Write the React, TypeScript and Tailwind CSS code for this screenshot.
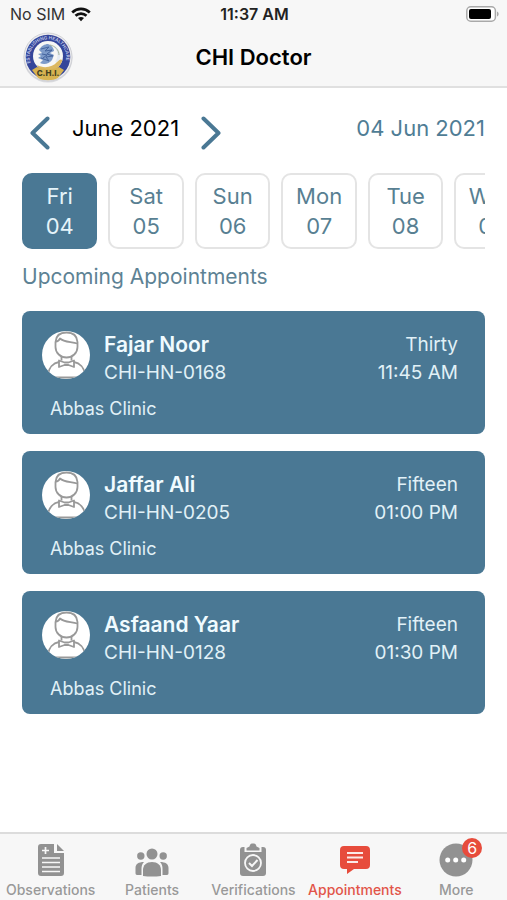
import type { ReactNode } from "react";

const days = [
  ["Fri", "04"],
  ["Sat", "05"],
  ["Sun", "06"],
  ["Mon", "07"],
  ["Tue", "08"],
  ["Wed", "09"],
];

const appointments = [
  { name: "Fajar Noor", code: "CHI-HN-0168", length: "Thirty", time: "11:45 AM", clinic: "Abbas Clinic" },
  { name: "Jaffar Ali", code: "CHI-HN-0205", length: "Fifteen", time: "01:00 PM", clinic: "Abbas Clinic" },
  { name: "Asfaand Yaar", code: "CHI-HN-0128", length: "Fifteen", time: "01:30 PM", clinic: "Abbas Clinic" },
];

function Wifi() {
  return (
    <svg className="h-[15px] w-5" viewBox="0 0 20 15" fill="none" stroke="#111" strokeWidth="2.7" aria-hidden="true">
      <path d="M1.2 5.4C6.2.8 13.8.8 18.8 5.4" />
      <path d="M4.5 8.8C7.6 5.9 12.4 5.9 15.5 8.8" />
      <path d="M10 14.3l-3-3.2c1.7-1.5 4.3-1.5 6 0z" fill="#111" stroke="none" />
    </svg>
  );
}

function Battery() {
  return (
    <svg className="h-4 w-[33px]" viewBox="0 0 33 16" aria-hidden="true">
      <rect x="0.8" y="0.8" width="28.6" height="14.4" rx="4" fill="#fff" stroke="#a9a9a9" strokeWidth="1.5" />
      <rect x="3" y="3" width="22" height="10" rx="2" fill="#000" />
      <path d="M31 5.5c2.2.8 2.2 4.2 0 5z" fill="#a9a9a9" />
    </svg>
  );
}

function Logo() {
  return (
    <svg className="size-[52px]" viewBox="0 0 52 52" role="img" aria-label="CHI">
      <defs>
        <path id="ring" d="M8.5 32A18.3 18.3 0 1 1 43.5 32" />
      </defs>
      <circle cx="26" cy="27" r="24.5" fill="#d9dade" />
      <circle cx="26" cy="26" r="24" fill="#ececee" stroke="#c9cacf" strokeWidth="0.8" />
      <circle cx="26" cy="26" r="22.3" fill="#35469a" />
      <text fill="#c3cbea" fontSize="4.6" fontFamily="Inter, sans-serif" fontWeight="600">
        <textPath href="#ring">ESTABLISHING HEALTHCARE</textPath>
      </text>
      <circle cx="26" cy="25" r="15" fill="#f7f7f5" />
      <path d="M15 34c7 4 16 2 20-3 2-3 4-3 5.5-2-2 7-8 11-14.5 11-5 0-9-2-11-6z" fill="#dcb860" />
      <path d="M17 19c2-4 6-6 9-6 3 1 6 4 6 7l-4 2 4 2-2 5c-3 4-8 5-12 3l3-3-5-2 3-2-3-2 4-1z" fill="#7d9bc9" />
      <path d="M19 18l8-2-4 4 7-1-5 4 6 2-7 1 3 4-8-3M20 23l5 1-4 3" fill="none" stroke="#45659f" strokeWidth="1" />
      <path d="M31 14c5 2 8 7 7 13-1 3-3 4-5 4 4-5 3-11-2-17z" fill="#e4ebf2" />
      <path d="M28 14c5 1 9 5 9 10" fill="none" stroke="#97a789" strokeWidth="0.8" />
      <path d="M10 39l5-3c6 3 16 3 22 0l5 3-6 8c-5 3-15 3-20 0z" fill="#d7b351" />
      <text x="26" y="45" textAnchor="middle" fill="#43401f" fontSize="8" fontWeight="800" fontFamily="Inter, sans-serif">C.H.I.</text>
    </svg>
  );
}

function Chevron({ next = false }: { next?: boolean }) {
  return (
    <svg className="h-[34px] w-5" viewBox="0 0 20 34" fill="none" stroke="#4a7894" strokeWidth="4" strokeLinecap="round" strokeLinejoin="round" aria-hidden="true">
      <path d={next ? "M2.5 2.5l15 14.5-15 14.5" : "M17.5 2.5L2.5 17l15 14.5"} />
    </svg>
  );
}

function Avatar() {
  return (
    <svg className="size-12 shrink-0 rounded-full bg-white" viewBox="0 0 48 48" fill="none" stroke="#999" strokeWidth="1.8" strokeLinejoin="round" aria-hidden="true">
      <path d="M13.500 11C14 4 18 1.500 24.500 1.500S35 4 35.500 11v5c0 6-5 10.500-11 10.500S13.500 22 13.500 16z" />
      <path d="M14 10.500c2 0 3-1 4-3 4 4 11 3 17.500 5" />
      <path d="M19.500 25.500v4M29.500 25.500v4" />
      <path d="M17 29.500l5.500 2h4l5.500-2v6.500l-5.500-2h-4l-5.500 2z" />
      <path d="M17 31C11 32 7 37 6 43M32 31c6 1 10 6 11 12" />
      <path d="M10 46.500h28" />
    </svg>
  );
}

function ObservationsIcon() {
  return (
    <svg className="size-9" viewBox="0 0 36 36" aria-hidden="true">
      <path d="M8 2h13v9h10v20a3 3 0 0 1-3 3H8a3 3 0 0 1-3-3V5a3 3 0 0 1 3-3z" fill="#929292" />
      <path d="M24 2l7 7h-7z" fill="#929292" />
      <path d="M12.5 5v7M9 8.500h7M9 16h18M9 20.500h18M9 25h18M9 29.500h18" stroke="#f7f7f7" strokeWidth="1.700" />
    </svg>
  );
}

function PatientsIcon() {
  return (
    <svg className="size-9" viewBox="0 0 36 36" fill="#929292" aria-hidden="true">
      <circle cx="18" cy="12" r="5.5" />
      <circle cx="6.8" cy="14" r="3.7" />
      <circle cx="29.2" cy="14" r="3.7" />
      <path d="M9 34v-6c0-5 3.500-8 9-8s9 3 9 8v6q-9 1-18 0z" />
      <path d="M7.500 33H3c-1 0-1.500-1-1.500-2v-5c0-4 3-6 8.500-6-2 2-2.500 4-2.500 7zM28.500 33H33c1 0 1.500-1 1.500-2v-5c0-4-3-6-8.500-6 2 2 2.500 4 2.500 7z" />
    </svg>
  );
}

function VerificationsIcon() {
  return (
    <svg className="size-9" viewBox="0 0 36 36" aria-hidden="true">
      <path d="M8 5h20a3 3 0 0 1 3 3v23a3 3 0 0 1-3 3H8a3 3 0 0 1-3-3V8a3 3 0 0 1 3-3z" fill="#929292" />
      <path d="M9.500 3h17v7h-17z" fill="#f7f7f7" />
      <path d="M11.500 8.500V6l3-1.500C15 2 16 1.500 18 1.500s3 .5 3.500 3l3 1.500v2.500z" fill="#929292" />
      <circle cx="18" cy="21" r="8" fill="none" stroke="#f7f7f7" strokeWidth="1.800" />
      <path d="M14 21l3 3 5.500-6" fill="none" stroke="#f7f7f7" strokeWidth="2" />
    </svg>
  );
}

function AppointmentsIcon() {
  return (
    <svg className="size-9" viewBox="0 0 36 36" aria-hidden="true">
      <path d="M7 4h22a4 4 0 0 1 4 4v15a4 4 0 0 1-4 4H17l-7 5v-5H7a4 4 0 0 1-4-4V8a4 4 0 0 1 4-4z" fill="#e74c3c" />
      <path d="M10 11h16M10 15.500h16M10 20h11" stroke="#fbeae7" strokeWidth="1.800" />
    </svg>
  );
}

function MoreIcon() {
  return (
    <svg className="size-9" viewBox="0 0 36 36" aria-hidden="true">
      <circle cx="18" cy="18" r="16.500" fill="#929292" />
      <circle cx="9.700" cy="18" r="2.500" fill="#fff" />
      <circle cx="17.700" cy="18" r="2.500" fill="#fff" />
      <circle cx="25.700" cy="18" r="2.500" fill="#fff" />
    </svg>
  );
}

const tabs: { label: string; icon: ReactNode; active?: boolean; badge?: string }[] = [
  { label: "Observations", icon: <ObservationsIcon /> },
  { label: "Patients", icon: <PatientsIcon /> },
  { label: "Verifications", icon: <VerificationsIcon /> },
  { label: "Appointments", icon: <AppointmentsIcon />, active: true },
  { label: "More", icon: <MoreIcon />, badge: "6" },
];

export default function App() {
  return (
    <div className="flex min-h-screen flex-col bg-white font-['Inter',sans-serif]">
      <header className="border-b-2 border-[#e0e0e0] bg-[#f7f7f7]">
        <div className="grid h-7 grid-cols-3 items-center pr-2 pl-[10px]">
          <div className="flex items-center gap-1.5 text-base text-[#333]">
            No SIM <Wifi />
          </div>
          <div className="text-center text-base font-semibold text-[#222]">11:37 AM</div>
          <div className="flex justify-end"><Battery /></div>
        </div>
        <div className="grid h-[58px] grid-cols-[1fr_auto_1fr] items-center px-[22px]">
          <Logo />
          <h1 className="text-[22px] leading-7 font-semibold text-black">CHI Doctor</h1>
        </div>
      </header>

      <main className="flex-1 px-[22px] pt-6">
        <div className="flex items-start justify-between">
          <div className="flex items-start">
            <button type="button" aria-label="Previous month" className="pt-1 pl-2"><Chevron /></button>
            <h2 className="w-[151px] text-center text-[22px] leading-8 text-black">June 2021</h2>
            <button type="button" aria-label="Next month" className="pt-1"><Chevron next /></button>
          </div>
          <p className="text-[22px] leading-8 text-[#4f7d95]">04 Jun 2021</p>
        </div>

        <div className="mt-[23px] grid auto-cols-[16.3%] grid-flow-col gap-[11px] overflow-hidden">
          {days.map(([day, date], i) => (
            <button
              key={date}
              type="button"
              aria-pressed={i === 0}
              className={
                "flex h-[76px] flex-col items-center justify-center rounded-[10px] border-2 text-[22px] leading-[30px] " +
                (i === 0 ? "border-[#4a7894] bg-[#4a7894] text-[#e5f4fa]" : "border-[#e4e4e4] bg-white text-[#587f92]")
              }
            >
              <span>{day}</span>
              <span>{date}</span>
            </button>
          ))}
        </div>

        <h2 className="mt-3 text-[21px] leading-8 text-[#5d8294]">Upcoming Appointments</h2>

        <ul className="mt-[18px] flex flex-col gap-[17px]">
          {appointments.map((a) => (
            <li key={a.code} className="h-[123px] rounded-lg bg-[#4a7894] px-5 pt-5 text-[#e1f1f7]">
              <div className="flex items-start">
                <Avatar />
                <div className="ml-[14px] flex-1">
                  <h3 className="text-[21px] leading-7 font-semibold text-[#f0fbff]">{a.name}</h3>
                  <p className="text-[19px] leading-7">{a.code}</p>
                </div>
                <div className="pr-[7px] text-right text-[19px] leading-7">
                  <p>{a.length}</p>
                  <p>{a.time}</p>
                </div>
              </div>
              <p className="mt-2 pl-2 text-[18px] leading-7">{a.clinic}</p>
            </li>
          ))}
        </ul>
      </main>

      <nav className="grid grid-cols-5 border-t-2 border-[#dcdcdc] bg-[#f7f7f7] pt-2">
        {tabs.map((t) => (
          <button
            key={t.label}
            type="button"
            aria-current={t.active ? "page" : undefined}
            className={"flex flex-col items-center text-sm leading-5 font-medium " + (t.active ? "text-[#e25549]" : "text-[#999]")}
          >
            <span className="relative">
              {t.icon}
              {t.badge && (
                <span className="absolute -top-1 left-6 flex size-5 items-center justify-center rounded-full bg-[#e74c3c] text-base font-normal text-white">
                  {t.badge}
                </span>
              )}
            </span>
            <span className="mt-0.5">{t.label}</span>
          </button>
        ))}
      </nav>
    </div>
  );
}
